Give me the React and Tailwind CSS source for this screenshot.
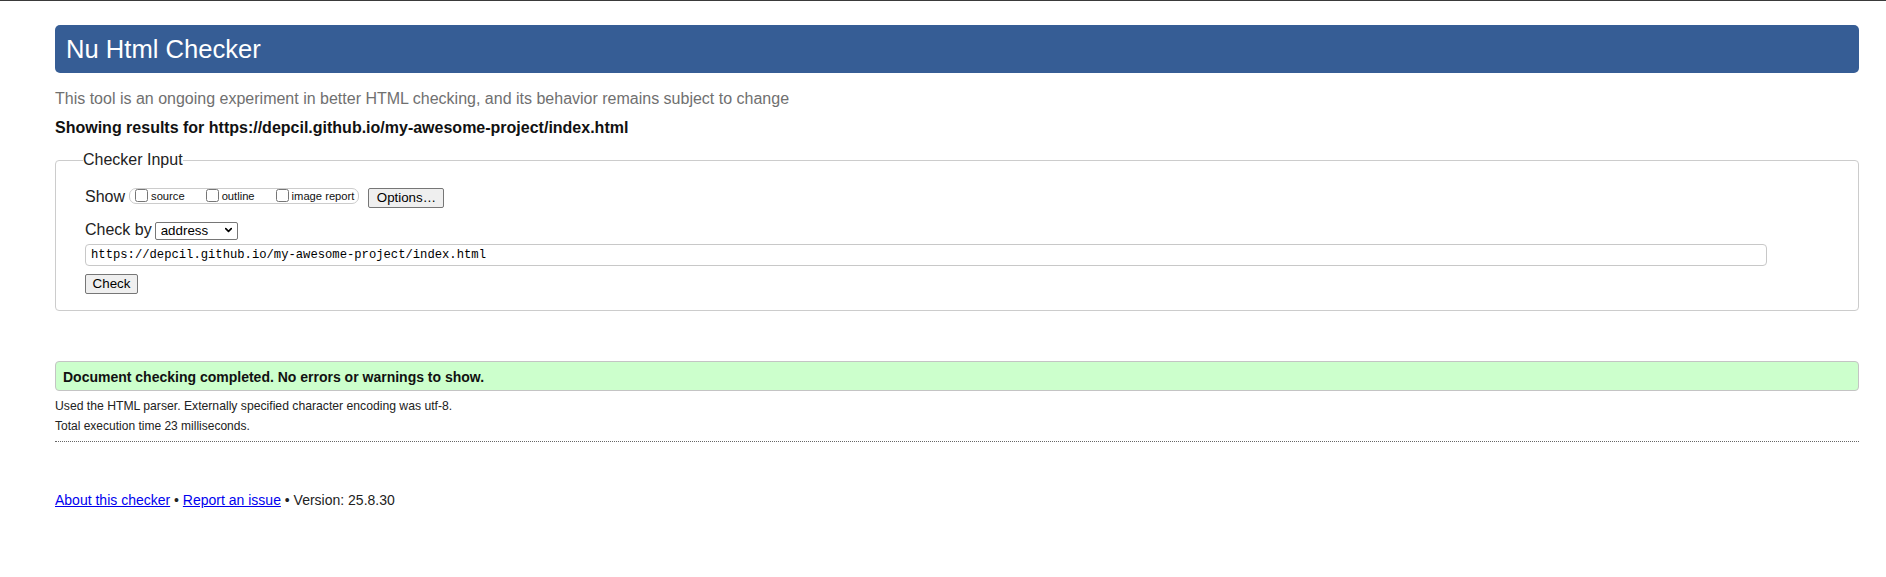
import { ChevronDown } from 'lucide-react';

const showOptions = [
  { id: 'show-source', label: 'source' },
  { id: 'show-outline', label: 'outline' },
  { id: 'show-image-report', label: 'image report' },
];

const NuChecker = () => {
  return (
    <div className="min-h-[577px] bg-white border-t border-[#3a3a3a] font-['Liberation_Sans',Arial,sans-serif] text-[#111]">
      <div className="pl-[55px] pr-[27px]">
        {/* Header */}
        <div className="mt-[24px] h-[48px] rounded-[5px] bg-[#365d95] pl-[11px] flex items-center">
          <h1 className="text-[25.6px] leading-[30px] text-white font-normal">Nu Html Checker</h1>
        </div>

        <p className="mt-[16px] text-[16px] leading-[20px] text-[#707070]">
          This tool is an ongoing experiment in better HTML checking, and its behavior remains subject to change
        </p>
        <p className="mt-[10px] text-[16px] leading-[18px] font-bold text-[#111]">
          Showing results for https://depcil.github.io/my-awesome-project/index.html
        </p>

        {/* Checker Input */}
        <fieldset className="mt-[14px] border border-[#ccc] rounded-[4px] pl-[29px] pr-[29px] pb-[16px] pt-[18px]">
          <legend className="-ml-[2px] text-[16px] leading-[18px] text-[#222]">Checker Input</legend>

          <div className="flex items-baseline">
            <span className="text-[16px] leading-[20px] text-[#222]">Show</span>
            <fieldset className="ml-[4px] h-[16px] border border-[#ccc] rounded-[7px] pl-[5px] pr-[4px] flex items-center gap-[21px]">
              {showOptions.map((opt) => (
                <label key={opt.id} htmlFor={opt.id} className="flex items-center">
                  <input id={opt.id} type="checkbox" className="m-0 w-[13px] h-[13px]" />
                  <span className="ml-[3px] text-[11.2px] leading-[13px] translate-y-[1px] text-[#111]">{opt.label}</span>
                </label>
              ))}
            </fieldset>
            <button className="ml-[9px] w-[76px] h-[20px] bg-[#efefef] border border-[#767676] rounded-[2px] text-[13.33px] leading-[18px] text-black">
              Options…
            </button>
          </div>

          <div className="mt-[10px] flex items-baseline">
            <span className="text-[16px] leading-[18px] text-[#222]">Check by</span>
            <div className="relative ml-[3px]">
              <select className="appearance-none w-[83px] h-[18px] pl-[5px] bg-white border border-[#767676] rounded-[2px] text-[13.33px] leading-[16px] text-black">
                <option>address</option>
                <option>file upload</option>
                <option>text input</option>
              </select>
              <ChevronDown strokeWidth={3.5} className="absolute right-[4px] top-1/2 -translate-y-1/2 w-[11px] h-[11px] text-black pointer-events-none" />
            </div>
          </div>

          <input
            type="url"
            defaultValue="https://depcil.github.io/my-awesome-project/index.html"
            className="mt-[2px] block w-[1682px] h-[22px] pl-[5px] border border-[#c8c8c8] rounded-[4px] font-['Liberation_Mono',monospace] text-[12.2px] text-black"
          />

          <button className="mt-[8px] block w-[53px] h-[20px] bg-[#efefef] border border-[#767676] rounded-[2px] text-[13.33px] leading-[18px] text-black">
            Check
          </button>
        </fieldset>

        {/* Result */}
        <div className="mt-[50px] h-[30px] bg-[#ccffcc] border border-[#c4c4c4] rounded-[4px] pl-[7px] flex items-center">
          <p className="text-[14px] leading-[16px] font-bold text-[#111] translate-y-[1px]">
            Document checking completed. No errors or warnings to show.
          </p>
        </div>
        <p className="mt-[5px] text-[12.2px] leading-[20px] text-[#222]">
          Used the HTML parser. Externally specified character encoding was utf-8.
        </p>
        <p className="text-[12px] leading-[20px] text-[#222]">Total execution time 23 milliseconds.</p>
        <div className="mt-[5px] border-t border-dotted border-[#666]" />

        {/* Footer */}
        <p className="mt-[50px] text-[14px] leading-[16px] text-[#222]">
          <a href="#" className="text-[#0000ee] underline">About this checker</a>
          {' • '}
          <a href="#" className="text-[#0000ee] underline">Report an issue</a>
          {' • Version: 25.8.30'}
        </p>
      </div>
    </div>
  );
};

export default function App() {
  return <NuChecker />;
}
